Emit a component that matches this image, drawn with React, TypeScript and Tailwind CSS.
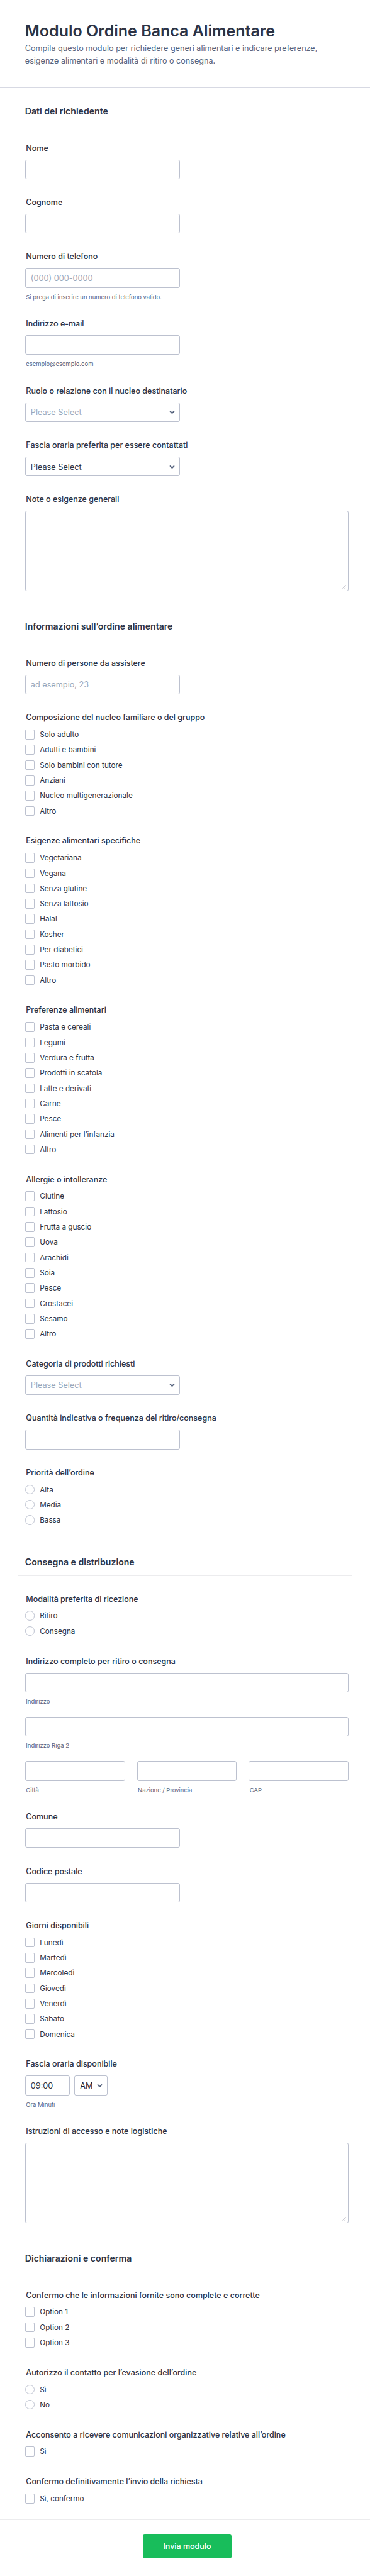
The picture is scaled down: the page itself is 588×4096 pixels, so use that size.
import type { ReactNode } from "react";

type FieldProps = {
  label: string;
  children: ReactNode;
};

const household = [
  "Solo adulto",
  "Adulti e bambini",
  "Solo bambini con tutore",
  "Anziani",
  "Nucleo multigenerazionale",
  "Altro",
];

const dietaryNeeds = [
  "Vegetariana",
  "Vegana",
  "Senza glutine",
  "Senza lattosio",
  "Halal",
  "Kosher",
  "Per diabetici",
  "Pasto morbido",
  "Altro",
];

const foodPreferences = [
  "Pasta e cereali",
  "Legumi",
  "Verdura e frutta",
  "Prodotti in scatola",
  "Latte e derivati",
  "Carne",
  "Pesce",
  "Alimenti per l’infanzia",
  "Altro",
];

const allergies = [
  "Glutine",
  "Lattosio",
  "Frutta a guscio",
  "Uova",
  "Arachidi",
  "Soia",
  "Pesce",
  "Crostacei",
  "Sesamo",
  "Altro",
];

const weekdays = [
  "Lunedì",
  "Martedì",
  "Mercoledì",
  "Giovedì",
  "Venerdì",
  "Sabato",
  "Domenica",
];

function Field({ label, children }: FieldProps) {
  return (
    <div className="pb-[29.07px] pl-[39.8px]">
      <p className="mb-[11px] ml-[1.5px] h-[15px] text-[12.5px] leading-[15.4px] font-medium whitespace-nowrap">
        {label}
      </p>
      {children}
    </div>
  );
}

function SectionHeading({ children }: { children: ReactNode }) {
  return (
    <div className="mr-[29.2px] mb-[28.6px] ml-[28.8px] border-b border-[#ececee] pb-[13px] pl-[11px]">
      <h2 className="h-[17px] text-[14.1px] leading-[17px] font-semibold">{children}</h2>
    </div>
  );
}

function Hint({ children }: { children: ReactNode }) {
  return (
    <p className="mt-[9.1px] ml-[1.5px] h-[11.25px] text-[9.45px] leading-[11.6px] whitespace-nowrap text-[#57647e]">
      {children}
    </p>
  );
}

function TextInput({ placeholder }: { placeholder?: string }) {
  return (
    <input
      type="text"
      placeholder={placeholder}
      className="block h-[31.3px] w-[246px] rounded-[3px] border border-[#bcc1cf] bg-white px-[8px] pt-[0.6px] text-[12.7px] placeholder:text-[#98a8bd]"
    />
  );
}

function WideInput() {
  return (
    <input
      type="text"
      className="block h-[31.3px] w-full rounded-[3px] border border-[#bcc1cf] bg-white px-[8px] text-[12.7px]"
    />
  );
}

function Chevron() {
  return (
    <svg viewBox="0 0 9 7" className="h-[7px] w-[9px]" fill="none" stroke="#57647e" strokeWidth="1.8">
      <path d="M1.5 2 4.5 5 7.5 2" strokeLinecap="round" strokeLinejoin="round" />
    </svg>
  );
}

function Select({ muted }: { muted?: boolean }) {
  return (
    <div className="flex h-[31.3px] w-[246px] items-center justify-between rounded-[3px] border border-[#bcc1cf] bg-white pt-[0.6px] pr-[7px] pl-[8px] text-[12.7px]">
      <span className={muted ? "text-[#98a8bd]" : ""}>Please Select</span>
      <Chevron />
    </div>
  );
}

function TextArea() {
  return (
    <div className="flex h-[127.7px] w-[514.2px] items-end justify-end rounded-[3px] border border-[#bcc1cf] bg-white p-[3px]">
      <svg viewBox="0 0 6 6" className="size-[6px]" fill="none" stroke="#c4c4cd" strokeWidth="0.9">
        <path d="M0.3 5.7 5.7 0.3M3.4 5.7 5.7 3.4" />
      </svg>
    </div>
  );
}

function Options({ items, round }: { items: string[]; round?: boolean }) {
  return (
    <div className="flex flex-col gap-[8.73px] pt-[0.85px] pb-[3.1px]">
      {items.map((item) => (
        <div key={item} className="flex h-[15.6px] items-start gap-[7.8px]">
          <span
            className={
              round
                ? "size-[15.6px] rounded-full border border-[#bcc1cf] bg-white"
                : "size-[15.6px] rounded-[2px] border border-[#bcc1cf] bg-white"
            }
          />
          <span className="text-[11.73px] leading-[16.6px] text-[#2c3345]">{item}</span>
        </div>
      ))}
    </div>
  );
}

export default function App() {
  return (
    <main className="h-[4096px] w-[588px] overflow-hidden bg-white font-['Inter',sans-serif] text-[#2c3345]">
      <header className="h-[140px] border-b border-[#d7d9e3] pt-[34px] pl-[39.8px]">
        <h1 className="h-[30px] text-[25px] leading-[30px] font-semibold whitespace-nowrap">
          Modulo Ordine Banca Alimentare
        </h1>
        <p className="mt-[3px] text-[12.6px] leading-[20.3px] whitespace-nowrap text-[#57647e]">
          Compila questo modulo per richiedere generi alimentari e indicare preferenze,
          <br />
          esigenze alimentari e modalità di ritiro o consegna.
        </p>
      </header>

      <section className="pt-[28px] pb-[18.1px]">
        <SectionHeading>Dati del richiedente</SectionHeading>
        <Field label="Nome">
          <TextInput />
        </Field>
        <Field label="Cognome">
          <TextInput />
        </Field>
        <Field label="Numero di telefono">
          <TextInput placeholder="(000) 000-0000" />
          <Hint>Si prega di inserire un numero di telefono valido.</Hint>
        </Field>
        <Field label="Indirizzo e-mail">
          <TextInput />
          <Hint>esempio@esempio.com</Hint>
        </Field>
        <Field label="Ruolo o relazione con il nucleo destinatario">
          <Select muted />
        </Field>
        <Field label="Fascia oraria preferita per essere contattati">
          <Select />
        </Field>
        <Field label="Note o esigenze generali">
          <TextArea />
        </Field>
      </section>

      <section className="pb-[18.1px]">
        <SectionHeading>Informazioni sull’ordine alimentare</SectionHeading>
        <Field label="Numero di persone da assistere">
          <TextInput placeholder="ad esempio, 23" />
        </Field>
        <Field label="Composizione del nucleo familiare o del gruppo">
          <Options items={household} />
        </Field>
        <Field label="Esigenze alimentari specifiche">
          <Options items={dietaryNeeds} />
        </Field>
        <Field label="Preferenze alimentari">
          <Options items={foodPreferences} />
        </Field>
        <Field label="Allergie o intolleranze">
          <Options items={allergies} />
        </Field>
        <Field label="Categoria di prodotti richiesti">
          <Select muted />
        </Field>
        <Field label="Quantità indicativa o frequenza del ritiro/consegna">
          <TextInput />
        </Field>
        <Field label="Priorità dell’ordine">
          <Options items={["Alta", "Media", "Bassa"]} round />
        </Field>
      </section>

      <section className="pb-[18.1px]">
        <SectionHeading>Consegna e distribuzione</SectionHeading>
        <Field label="Modalità preferita di ricezione">
          <Options items={["Ritiro", "Consegna"]} round />
        </Field>
        <Field label="Indirizzo completo per ritiro o consegna">
          <div className="flex w-[514.2px] flex-col gap-[18.85px]">
            <div>
              <WideInput />
              <Hint>Indirizzo</Hint>
            </div>
            <div>
              <WideInput />
              <Hint>Indirizzo Riga 2</Hint>
            </div>
            <div className="grid grid-cols-3 gap-[19px]">
              <div>
                <WideInput />
                <Hint>Città</Hint>
              </div>
              <div>
                <WideInput />
                <Hint>Nazione / Provincia</Hint>
              </div>
              <div>
                <WideInput />
                <Hint>CAP</Hint>
              </div>
            </div>
          </div>
        </Field>
        <Field label="Comune">
          <TextInput />
        </Field>
        <Field label="Codice postale">
          <TextInput />
        </Field>
        <Field label="Giorni disponibili">
          <Options items={weekdays} />
        </Field>
        <Field label="Fascia oraria disponibile">
          <div className="flex gap-[6.7px] text-[12.7px]">
            <div className="flex h-[31.3px] w-[71.7px] items-center rounded-[3px] border border-[#bcc1cf] pt-[0.6px] pl-[8px]">
              09:00
            </div>
            <div className="flex h-[31.3px] w-[53.3px] items-center justify-between rounded-[3px] border border-[#bcc1cf] pt-[0.6px] pr-[7px] pl-[8px]">
              <span className="text-[#1c1c2b]">AM</span>
              <Chevron />
            </div>
          </div>
          <Hint>Ora Minuti</Hint>
        </Field>
        <Field label="Istruzioni di accesso e note logistiche">
          <TextArea />
        </Field>
      </section>

      <section className="-mb-[6.6px]">
        <SectionHeading>Dichiarazioni e conferma</SectionHeading>
        <Field label="Confermo che le informazioni fornite sono complete e corrette">
          <Options items={["Option 1", "Option 2", "Option 3"]} />
        </Field>
        <Field label="Autorizzo il contatto per l’evasione dell’ordine">
          <Options items={["Sì", "No"]} round />
        </Field>
        <Field label="Acconsento a ricevere comunicazioni organizzative relative all’ordine">
          <Options items={["Sì"]} />
        </Field>
        <Field label="Confermo definitivamente l’invio della richiesta">
          <Options items={["Sì, confermo"]} />
        </Field>
      </section>

      <footer className="flex justify-center border-t border-[#ececee] pt-[23px] pl-[7px]">
        <button className="h-[37.5px] w-[141px] rounded-[3px] bg-[#18bd5b] text-[12.5px] font-medium text-white">
          Invia modulo
        </button>
      </footer>
    </main>
  );
}
